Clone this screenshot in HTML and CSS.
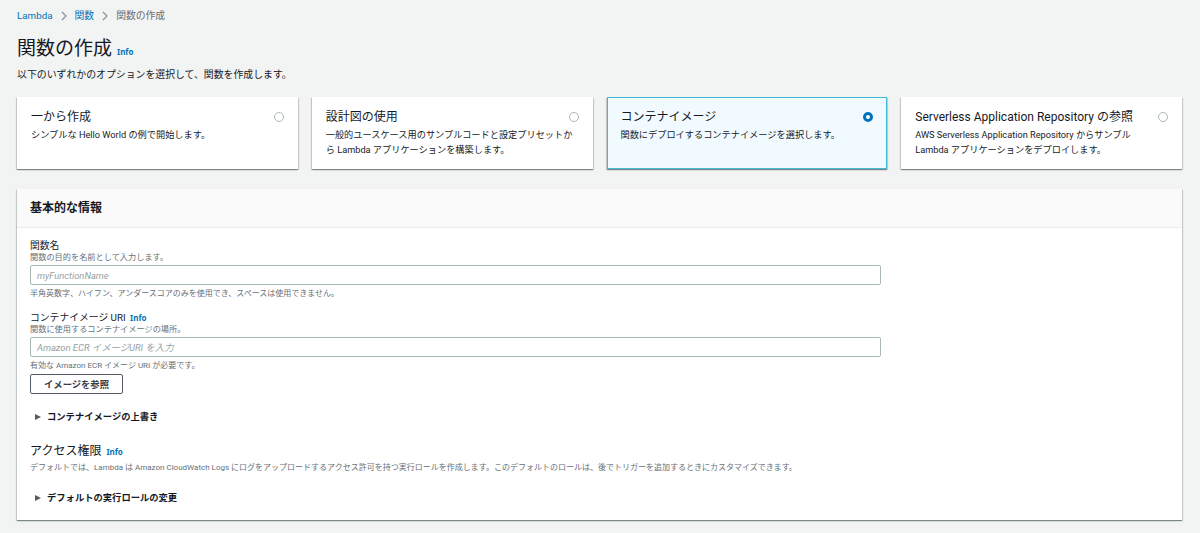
FILE: index.html
```html
<!DOCTYPE html>
<html lang="ja">
<head>
<meta charset="utf-8">
<title>関数の作成</title>
<link rel="stylesheet" href="styles.css">
</head>
<body>
<div class="page">
  <nav class="breadcrumb">
    <a class="crumb-link">Lambda</a>
    <svg class="chev" width="6" height="10" viewBox="0 0 6 10"><path d="M1 1l4 4-4 4" fill="none" stroke="#879196" stroke-width="1.2"/></svg>
    <a class="crumb-link">関数</a>
    <svg class="chev" width="6" height="10" viewBox="0 0 6 10"><path d="M1 1l4 4-4 4" fill="none" stroke="#879196" stroke-width="1.2"/></svg>
    <span class="crumb-current">関数の作成</span>
  </nav>

  <div class="title-row">
    <h1 class="page-title">関数の作成</h1>
    <a class="info">Info</a>
  </div>
  <p class="subtitle">以下のいずれかのオプションを選択して、関数を作成します。</p>

  <div class="tiles">
    <div class="tile">
      <div class="tile-head"><span class="tile-title">一から作成</span><span class="radio"></span></div>
      <p class="tile-desc">シンプルな Hello World の例で開始します。</p>
    </div>
    <div class="tile">
      <div class="tile-head"><span class="tile-title">設計図の使用</span><span class="radio"></span></div>
      <p class="tile-desc">一般的ユースケース用のサンプルコードと設定プリセットから Lambda アプリケーションを構築します。</p>
    </div>
    <div class="tile tile-selected">
      <div class="tile-head"><span class="tile-title">コンテナイメージ</span><span class="radio radio-on"></span></div>
      <p class="tile-desc">関数にデプロイするコンテナイメージを選択します。</p>
    </div>
    <div class="tile">
      <div class="tile-head"><span class="tile-title">Serverless Application Repository の参照</span><span class="radio"></span></div>
      <p class="tile-desc">AWS Serverless Application Repository からサンプル <span class="nw">Lambda アプリケーション</span>をデプロイします。</p>
    </div>
  </div>

  <section class="panel">
    <div class="panel-header"><h2 class="panel-title">基本的な情報</h2></div>
    <div class="panel-body">
      <div class="field">
        <div class="label">関数名</div>
        <div class="desc">関数の目的を名前として入力します。</div>
        <input class="text-input" type="text" placeholder="myFunctionName">
        <div class="hint">半角英数字、ハイフン、アンダースコアのみを使用でき、スペースは使用できません。</div>
      </div>
      <div class="field field-2">
        <div class="label">コンテナイメージ URI <a class="info info-sm">Info</a></div>
        <div class="desc">関数に使用するコンテナイメージの場所。</div>
        <input class="text-input" type="text" placeholder="Amazon ECR イメージURI を入力">
        <div class="hint">有効な Amazon ECR イメージ URI が必要です。</div>
        <button class="btn" type="button">イメージを参照</button>
      </div>
      <div class="expander expander-1"><span class="tri"></span>コンテナイメージの上書き</div>

      <div class="section-title">アクセス権限 <a class="info info-sm">Info</a></div>
      <div class="hint section-desc">デフォルトでは、Lambda は Amazon CloudWatch Logs にログをアップロードするアクセス許可を持つ実行ロールを作成します。このデフォルトのロールは、後でトリガーを追加するときにカスタマイズできます。</div>
      <div class="expander expander-2"><span class="tri"></span>デフォルトの実行ロールの変更</div>
    </div>
  </section>
</div>
</body>
</html>
```

FILE: styles.css
```css
* { box-sizing: border-box; }
html, body { margin: 0; padding: 0; }
body {
  background: #f2f3f3;
  font-family: "Roboto", "Noto Sans CJK JP", sans-serif;
  color: #16191f;
  width: 1200px;
  height: 533px;
  overflow: hidden;
}
p, h1, h2 { margin: 0; }
.page { padding: 9px 18px 0 17px; }

.breadcrumb {
  display: flex;
  align-items: center;
  height: 14px;
  font-size: 9.8px;
  line-height: 14px;
}
.crumb-link { color: #0073bb; }
.crumb-current { color: #687078; }
.chev { margin: 0 8px; }

.title-row {
  display: flex;
  align-items: baseline;
  margin-top: 13px;
  height: 26px;
}
.page-title {
  font-size: 19px;
  line-height: 26px;
  font-weight: 400;
  color: #16191f;
}
.info {
  color: #0073bb;
  font-weight: 700;
  font-size: 8px;
  margin-left: 5px;
  font-family: "Noto Sans", sans-serif;
}
.info-sm { margin-left: 2px; }
.subtitle {
  margin-top: 6px;
  font-size: 9.9px;
  line-height: 14px;
  color: #16191f;
}

.tiles {
  display: grid;
  grid-template-columns: repeat(4, 1fr);
  gap: 14px;
  margin-top: 15px;
}
.tile {
  height: 72px;
  background: #fff;
  padding: 11px 13px 0 13px;
  box-shadow: 0 1px 1px 0 rgba(0,28,36,.3), 1px 1px 1px 0 rgba(0,28,36,.15), -1px 1px 1px 0 rgba(0,28,36,.15);
  border: 1px solid transparent;
}
.tile-selected {
  background: #f1faff;
  border-color: #44b9d6;
}
.tile-head {
  display: flex;
  align-items: center;
  justify-content: space-between;
  height: 16px;
}
.tile-title {
  font-size: 12px;
  line-height: 16px;
  color: #16191f;
}
.radio {
  width: 10px;
  height: 10px;
  border-radius: 50%;
  border: 1px solid #aab7b8;
  background: #fff;
  flex: none;
  margin-right: 0;
}
.radio-on { border: 3px solid #0073bb; }
.tile-desc {
  margin-top: 2px;
  font-size: 9.2px;
  line-height: 15px;
  color: #16191f;
}
.nw { white-space: nowrap; }

.panel {
  margin-top: 20px;
  background: #fff;
  box-shadow: 0 1px 1px 0 rgba(0,28,36,.3), 1px 1px 1px 0 rgba(0,28,36,.15), -1px 1px 1px 0 rgba(0,28,36,.15);
}
.panel-header {
  height: 39px;
  background: #fafafa;
  border-bottom: 1px solid #eaeded;
  display: flex;
  align-items: center;
  padding: 0 13px;
}
.panel-title {
  font-size: 12px;
  font-weight: 700;
  line-height: 16px;
}
.panel-body { padding: 12px 13px 16px 13px; }

.field { display: flex; flex-direction: column; align-items: flex-start; }
.field-2 { margin-top: 13px; }
.label { font-size: 9.8px; line-height: 12px; color: #16191f; }
.desc { font-size: 8.2px; line-height: 10px; color: #687078; }
.hint { font-size: 8px; line-height: 10px; color: #687078; margin-top: 4px; }
.text-input {
  margin-top: 3px;
  width: 851px;
  height: 20px;
  border: 1px solid #aab7b8;
  border-radius: 2px;
  padding: 0 6px;
  font-family: "Roboto", "Noto Sans CJK JP", sans-serif;
  font-size: 9.4px;
  outline: none;
  background: #fff;
}
.text-input::placeholder { color: #95a1a3; font-style: italic; }
.btn {
  margin-top: 3px;
  width: 93px;
  height: 20px;
  background: #fff;
  border: 1px solid #545b64;
  border-radius: 2px;
  font-family: "Roboto", "Noto Sans CJK JP", sans-serif;
  font-weight: 700;
  font-size: 9.3px;
  color: #3b4048;
  padding: 0;
}
.expander {
  display: flex;
  align-items: center;
  font-size: 9.3px;
  line-height: 12px;
  font-weight: 700;
  color: #16191f;
}
.expander-1 { margin-top: 17px; }
.expander-2 { margin-top: 19px; }
.tri {
  width: 0;
  height: 0;
  border-left: 6px solid #545b64;
  border-top: 3.5px solid transparent;
  border-bottom: 3.5px solid transparent;
  margin: 0 6px 0 5px;
}
.section-title {
  margin-top: 20px;
  font-size: 12px;
  line-height: 16px;
  color: #16191f;
}
.section-desc { margin-top: 3px; }
```
